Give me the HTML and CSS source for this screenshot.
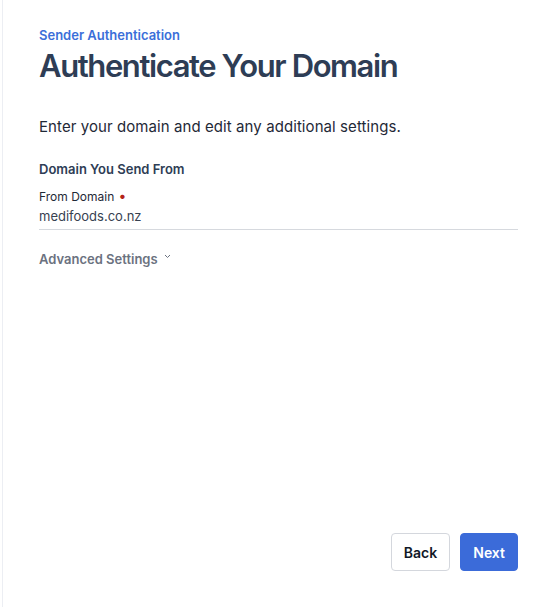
FILE: index.html
```html
<!DOCTYPE html>
<html lang="en">
<head>
<meta charset="utf-8">
<title>Authenticate Your Domain</title>
<link rel="stylesheet" href="styles.css">
</head>
<body>
<div class="panel">
  <main class="content">
    <div class="eyebrow">Sender Authentication</div>
    <h1 class="title">Authenticate Your Domain</h1>
    <p class="intro">Enter your domain and edit any additional settings.</p>
    <h2 class="section-title">Domain You Send From</h2>
    <div class="field">
      <label class="field-label">From Domain <span class="req">•</span></label>
      <div class="field-value">medifoods.co.nz</div>
    </div>
    <button class="advanced" type="button">Advanced Settings
      <svg class="chev" width="7" height="5" viewBox="0 0 7 5"><path d="M1 1 L3.5 3.5 L6 1" fill="none" stroke="#6b7280" stroke-width="1"/></svg>
    </button>
  </main>
  <footer class="actions">
    <button class="btn btn-secondary" type="button">Back</button>
    <button class="btn btn-primary" type="button">Next</button>
  </footer>
</div>
</body>
</html>
```

FILE: styles.css
```css
* { box-sizing: border-box; }
html, body { margin: 0; padding: 0; background: #fff; }
body {
  font-family: Inter, "Liberation Sans", sans-serif;
  color: #1f2937;
}
.panel {
  margin-left: 2px;
  border-left: 1px solid #eceef3;
  min-height: 607px;
  display: flex;
  flex-direction: column;
  padding: 0 28px 36px 36px;
}
.content { flex: 1; }
.eyebrow {
  margin-top: 27px;
  font-size: 13px;
  line-height: 16px;
  font-weight: 600;
  color: #3b6fd9;
}
.title {
  margin: 3px 0 0;
  font-size: 31px;
  line-height: 40px;
  font-weight: 600;
  color: #2e3d55;
  letter-spacing: -1.4px;
}
.intro {
  margin: 30px 0 0;
  font-size: 15px;
  line-height: 22px;
  color: #1f2937;
  letter-spacing: 0.08px;
}
.section-title {
  margin: 21px 0 0;
  font-size: 13px;
  line-height: 20px;
  font-weight: 600;
  color: #2e3d55;
}
.field { margin-top: 9px; border-bottom: 1px solid #d6d9de; padding-bottom: 3px; }
.field-label {
  display: block;
  font-size: 12px;
  line-height: 18px;
  color: #1f2937;
}
.req { color: #b42318; margin-left: 1px; font-size: 14px; line-height: 1; }
.field-value {
  font-size: 13px;
  line-height: 20px;
  color: #374151;
}
.advanced {
  margin-top: 19px;
  padding: 0;
  border: 0;
  background: none;
  font-family: inherit;
  font-size: 13px;
  line-height: 20px;
  font-weight: 600;
  color: #6b7280;
  display: flex;
  align-items: center;
  gap: 6px;
}
.chev { margin-top: -5px; }
.actions {
  display: flex;
  justify-content: flex-end;
  gap: 10px;
}
.btn {
  height: 38px;
  padding: 0 12px;
  border-radius: 4px;
  font-family: inherit;
  font-size: 14px;
  font-weight: 600;
}
.btn-secondary {
  background: #fff;
  color: #111827;
  border: 1px solid #d4d7dd;
}
.btn-primary {
  background: #3b6bd9;
  color: #fff;
  border: 1px solid #3b6bd9;
}
```
